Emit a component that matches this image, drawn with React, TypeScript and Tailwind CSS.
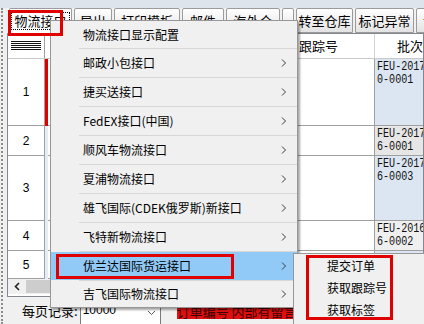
import React from 'react';

const cjk = "font-['Microsoft_YaHei','Noto_Sans_CJK_SC',sans-serif]";

const tabs = [
  { label: '物流接口', w: 'w-[63px]', active: true },
  { label: '导出', w: 'w-[38px]' },
  { label: '打印模板', w: 'w-[66px]' },
  { label: '邮件', w: 'w-[42px]' },
  { label: '海外仓', w: 'w-[54px]' },
  { label: '', w: 'w-[12px]' },
  { label: '转至仓库', w: 'w-[57px]' },
  { label: '标记异常', w: 'w-[59px]' },
  { label: '订单', w: 'w-[40px]' },
];

const rows = [
  { n: '1', h: 'h-[67px]', batch: ['FEU-2017', '0-0001'], bg: 'bg-[#dce6f2]', current: true },
  { n: '2', h: 'h-[30px]', batch: ['FEU-2017', '6-0001'], bg: 'bg-[#e6e6e6]' },
  { n: '3', h: 'h-[65px]', batch: ['FEU-2017', '6-0003'], bg: 'bg-[#dce6f2]' },
  { n: '4', h: 'h-[30px]', batch: ['FEU-2016', '6-0002'], bg: 'bg-[#efefef]' },
  { n: '5', h: 'h-[28px]', batch: [], bg: 'bg-[#dce6f2]' },
];

const menuItems = [
  { label: '物流接口显示配置', arrow: false },
  { label: '邮政小包接口', arrow: true },
  { label: '捷买送接口', arrow: true },
  { label: 'FedEX接口(中国)', arrow: true },
  { label: '顺风车物流接口', arrow: true },
  { label: '夏浦物流接口', arrow: true },
  { label: '雄飞国际(CDEK俄罗斯)新接口', arrow: true },
  { label: '飞特新物流接口', arrow: true },
  { label: '优兰达国际货运接口', arrow: true, hot: true },
  { label: '吉飞国际物流接口', arrow: true },
];

function Chevron() {
  return (
    <svg width="6" height="9" viewBox="0 0 6 9" className="absolute right-[10px] top-1/2 -translate-y-1/2">
      <path d="M1 1l3.5 3.5L1 8" fill="none" stroke="#3c3c3c" strokeWidth="1" />
    </svg>
  );
}

export default function App() {
  return (
    <div className={`relative w-[424px] h-[324px] overflow-hidden bg-[#f0f0f0] text-black ${cjk}`}>
      {/* top strip */}
      <div className="h-[8px] bg-[#dde4ec]" />

      <div className="ml-[1px] border-l-2 border-dotted border-[#8c8c8c] h-[316px] flex flex-col">
        {/* tab buttons */}
        <div className="flex gap-[2px] ml-[6px] h-[25px] shrink-0">
          {tabs.map((t, i) => (
            <div
              key={i}
              className={`${t.w} shrink-0 h-full flex items-center justify-center text-[13px] whitespace-nowrap overflow-hidden border border-[#9b9b9b] rounded-t-[2px] ${
                t.active ? 'bg-white border-b-0' : 'bg-gradient-to-b from-white to-[#e3e3e3]'
              }`}
            >
              {t.active ? (
                <span className="border border-dotted border-black px-[2px] leading-[16px]">{t.label}</span>
              ) : (
                t.label
              )}
            </div>
          ))}
        </div>

        {/* grid */}
        <div className="ml-[4px] h-[264px] shrink-0 border border-[#828790] bg-white flex flex-col overflow-hidden">
          {/* header row */}
          <div className="flex h-[25px] shrink-0 border-b border-[#c8c8c8] text-[13px]">
            <div className="w-[37px] shrink-0 border-r border-[#a0a0a0] flex items-center justify-center">
              <svg width="30" height="10" viewBox="0 0 30 10">
                {[0, 2, 4, 6, 8].map((y) => (
                  <rect key={y} x="0" y={y} width="30" height="1" fill="#111" />
                ))}
              </svg>
            </div>
            <div className="w-[3px] shrink-0" />
            <div className="w-[249px] shrink-0" />
            <div className="w-[78px] shrink-0 pl-[2px] flex items-center border-r border-[#d4d4d4]">跟踪号</div>
            <div className="flex-1 pl-[22px] flex items-center whitespace-nowrap overflow-hidden">批次号</div>
          </div>

          {rows.map((r) => (
            <div key={r.n} className={`flex ${r.h} shrink-0`}>
              <div className="w-[37px] shrink-0 border-r border-b border-[#a0a0a0] flex items-center justify-center font-['Liberation_Sans',sans-serif] text-[12px]">
                {r.n}
              </div>
              <div className={`w-[3px] shrink-0 ${r.current ? 'bg-[#e00000]' : 'bg-[#e4ecf5]'}`} />
              <div className="w-[249px] shrink-0 border-b border-[#a0a0a0]" />
              <div className="w-[78px] shrink-0 border-b border-r border-[#a0a0a0]" />
              <div className={`flex-1 ${r.bg} border-b border-[#a0a0a0] pl-[2px] pt-[2px] whitespace-nowrap overflow-hidden`}>
                <div className="origin-top-left scale-x-[0.84] font-['Liberation_Mono',monospace] text-[12px] leading-[13px] text-[#111]">
                  {r.batch.map((b) => (
                    <div key={b}>{b}</div>
                  ))}
                </div>
              </div>
            </div>
          ))}

          {/* horizontal scrollbar */}
          <div className="flex h-[15px] shrink-0 bg-[#f0f0f0]">
            <div className="w-[18px] flex items-center justify-center">
              <svg width="6" height="9" viewBox="0 0 6 9">
                <path d="M5 1L1.5 4.5 5 8" fill="none" stroke="#222" strokeWidth="1.6" />
              </svg>
            </div>
            <div className="w-[60px] my-[1px] bg-[#cdcdcd]" />
          </div>
        </div>

        {/* bottom bar */}
        <div className="flex items-start pt-[5px] pl-[19px] text-[13px]">
          <span className="leading-[18px]">每页记录:</span>
          <div className="ml-[2px] w-[81px] h-[24px] bg-white border border-[#7a7a7a] relative font-['Liberation_Sans',sans-serif] text-[12px] leading-[14px] pl-[2px]">
            10000
            <svg width="9" height="6" viewBox="0 0 9 6" className="absolute right-[4px] top-[7px]">
              <path d="M1 1l3.5 3.5L8 1" fill="none" stroke="#555" strokeWidth="1" />
            </svg>
          </div>
          <span className="ml-[16px] mt-[3px] bg-[#e01010] text-[#3a0000] leading-[14px] whitespace-nowrap">订单编号 内部有留言</span>
        </div>
      </div>

      {/* context menu */}
      <div className="absolute left-[50px] top-[20px] w-[248px] border border-[#979797] bg-[#f0f0f0] shadow-[2px_2px_2px_rgba(0,0,0,0.35)] text-[12px]">
        {menuItems.map((m, i) => (
          <div key={m.label}>
            {i > 0 && <div className="ml-[28px] h-px bg-[#d7d7d7]" />}
            <div
              className={`relative flex items-center pl-[32px] whitespace-nowrap ${
                i === 0 ? 'h-[27px]' : i === menuItems.length - 1 ? 'h-[26px]' : 'h-[28px]'
              } ${m.hot ? 'bg-[#91c9f7]' : ''}`}
            >
              {m.label}
              {m.arrow && <Chevron />}
            </div>
          </div>
        ))}
      </div>

      {/* submenu */}
      <div className="absolute left-[293px] top-[253px] w-[140px] h-[80px] border border-[#979797] bg-[#f0f0f0] shadow-[2px_2px_2px_rgba(0,0,0,0.35)] pt-[1px] text-[12px]">
        {['提交订单', '获取跟踪号', '获取标签'].map((s) => (
          <div key={s} className="h-[22px] flex items-center pl-[33px]">
            {s}
          </div>
        ))}
      </div>

      {/* red annotation boxes */}
      <div className="absolute left-[8px] top-[10px] w-[55px] h-[26px] border-[3px] border-[#e00000] pointer-events-none" />
      <div className="absolute left-[56px] top-[254px] w-[178px] h-[25px] border-[3px] border-[#e00000] pointer-events-none" />
      <div className="absolute left-[306px] top-[255px] w-[87px] h-[65px] border-[3px] border-[#e00000] pointer-events-none" />
    </div>
  );
}
